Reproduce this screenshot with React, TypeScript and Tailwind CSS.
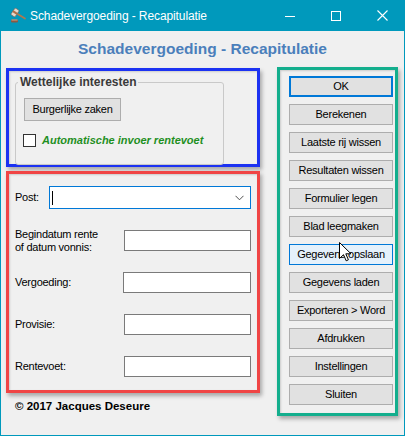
import React from "react";

const buttons = [
  "OK",
  "Berekenen",
  "Laatste rij wissen",
  "Resultaten wissen",
  "Formulier legen",
  "Blad leegmaken",
  "Gegevens opslaan",
  "Gegevens laden",
  "Exporteren > Word",
  "Afdrukken",
  "Instellingen",
  "Sluiten",
];

function Field({ label, width = "w-[127px]" }: { label: React.ReactNode; width?: string }) {
  return (
    <div className="h-[21px] flex items-center justify-between">
      <div className="text-[11px] tracking-[-0.25px] leading-[13px] text-black">{label}</div>
      <div className={`${width} h-[21px] bg-white border border-[#7a7a7a]`} />
    </div>
  );
}

export default function App() {
  return (
    <div className="relative w-[405px] h-[436px] bg-[#0099bc] flex flex-col overflow-hidden font-['Liberation_Sans',Arial,sans-serif]">
      {/* Title bar */}
      <div className="h-[31px] shrink-0 flex items-center text-white">
        <svg width="18" height="16" viewBox="0 0 18 16" className="ml-[9px]">
          <rect x="2" y="11.5" width="7" height="3" rx="1.2" fill="#8a5a44" />
          <rect x="2.5" y="11.5" width="6" height="1" fill="#d0a888" />
          <line x1="7" y1="5" x2="16" y2="10.5" stroke="#b0784c" strokeWidth="1.7" strokeLinecap="round" />
          <g transform="rotate(35 6 4.5)">
            <rect x="3.5" y="0.5" width="5" height="8" rx="1" fill="#e4d8cc" stroke="#6a5a50" strokeWidth="0.6" />
            <rect x="3.5" y="3.5" width="5" height="2" fill="#b07048" />
          </g>
        </svg>
        <span className="ml-[3px] text-[12px] tracking-[-0.1px]">Schadevergoeding - Recapitulatie</span>
        <div className="ml-auto flex h-full">
          <div className="w-[46px] h-full flex items-center justify-center">
            <svg width="10" height="10" viewBox="0 0 10 10">
              <line x1="0" y1="5.5" x2="10" y2="5.5" stroke="white" strokeWidth="1" />
            </svg>
          </div>
          <div className="w-[46px] h-full flex items-center justify-center">
            <svg width="10" height="10" viewBox="0 0 10 10">
              <rect x="0.5" y="0.5" width="9" height="9" fill="none" stroke="white" strokeWidth="1" />
            </svg>
          </div>
          <div className="w-[46px] h-full flex items-center justify-center">
            <svg width="11" height="11" viewBox="0 0 11 11">
              <path d="M0.5 0.5 L10.5 10.5 M10.5 0.5 L0.5 10.5" stroke="white" strokeWidth="1.1" />
            </svg>
          </div>
        </div>
      </div>

      {/* Body */}
      <div className="flex-1 mx-px mb-px bg-[#f0f0f0] flex flex-col">
        <div className="pt-[9px] h-[27px] text-center text-[15.5px] leading-[18px] font-bold text-[#4b7fbb]">
          Schadevergoeding - Recapitulatie
        </div>

        <div className="mt-[9px] pl-[5px] flex items-start">
          {/* Left column */}
          <div className="w-[254px] mt-px flex flex-col">
            {/* Blue box */}
            <div className="h-[99px] border-[3px] border-[#1c32f2] shadow-[2px_3px_4px_rgba(0,0,0,0.3),inset_1px_1px_2px_rgba(0,0,0,0.15)] pt-[4px] pl-[6px]">
              <fieldset className="w-[209px] border border-[#c9c9c9] rounded-[3px] px-0 pb-[17px]">
                <legend className="ml-[2px] px-[2px] text-[12px] leading-[14px] font-bold text-[#3a3a3a]">
                  Wettelijke interesten
                </legend>
                <div className="pl-[7px] pt-[9px] flex flex-col">
                  <div className="ml-px w-[97px] h-[23px] bg-[#e1e1e1] border border-[#adadad] flex items-center justify-center text-[11px] tracking-[-0.25px] text-black">
                    Burgerlijke zaken
                  </div>
                  <div className="mt-[13px] flex items-center h-[13px]">
                    <div className="w-[13px] h-[13px] bg-white border border-[#333333]" />
                    <span className="ml-[6px] text-[11px] leading-[13px] font-bold italic text-[#1f8f1f]">
                      Automatische invoer rentevoet
                    </span>
                  </div>
                </div>
              </fieldset>
            </div>

            {/* Red box */}
            <div className="mt-[4px] h-[222px] border-[3px] border-[#f04545] shadow-[2px_3px_4px_rgba(0,0,0,0.3),inset_1px_1px_2px_rgba(0,0,0,0.15)] pt-[12px] px-[6px] flex flex-col gap-[21px]">
              <div className="h-[23px] flex items-center justify-between">
                <div className="text-[11px] tracking-[-0.25px] text-black">Post:</div>
                <div className="w-[202px] h-[23px] bg-white border border-[#0078d7] flex items-center">
                  <div className="ml-[2px] w-px h-[14px] bg-black" />
                  <svg width="9" height="6" viewBox="0 0 9 6" className="ml-auto mr-[6px]">
                    <path d="M0.5 0.8 L4.5 4.8 L8.5 0.8" fill="none" stroke="#505050" strokeWidth="1" />
                  </svg>
                </div>
              </div>
              <Field
                label={
                  <>
                    Begindatum rente
                    <br />
                    of datum vonnis:
                  </>
                }
              />
              <Field label="Vergoeding:" width="w-[128px]" />
              <Field label="Provisie:" />
              <Field label="Rentevoet:" />
            </div>

            <div className="mt-[6px] ml-[9px] text-[11.5px] leading-[14px] font-bold text-black">
              © 2017 Jacques Deseure
            </div>
          </div>

          {/* Green box */}
          <div className="ml-[17px] w-[121px] h-[349px] border-[3px] border-[#13ae8d] shadow-[2px_3px_4px_rgba(0,0,0,0.3),inset_1px_1px_2px_rgba(0,0,0,0.15)] pt-[6px] pl-[9px] flex flex-col gap-[7px]">
            {buttons.map((b, i) => {
              const cls =
                i === 0
                  ? "border-2 border-[#0078d7] bg-[#e1e1e1]"
                  : i === 6
                  ? "border border-[#0078d7] bg-[#e5f1fb]"
                  : "border border-[#adadad] bg-[#e1e1e1]";
              return (
                <div
                  key={b}
                  className={`w-[104px] h-[21px] shrink-0 flex items-center justify-center text-[11px] tracking-[-0.25px] text-black ${cls}`}
                >
                  {b}
                </div>
              );
            })}
          </div>
        </div>
      </div>

      {/* Mouse cursor */}
      <svg width="13" height="20" viewBox="0 0 13 20" className="absolute left-[339px] top-[242px]">
        <path
          d="M0.5 0.5 L0.5 16.5 L4.5 12.7 L7.2 18.8 L9.4 17.8 L6.8 11.8 L12 11.8 Z"
          fill="white"
          stroke="black"
          strokeWidth="1"
          strokeLinejoin="miter"
        />
      </svg>
    </div>
  );
}
